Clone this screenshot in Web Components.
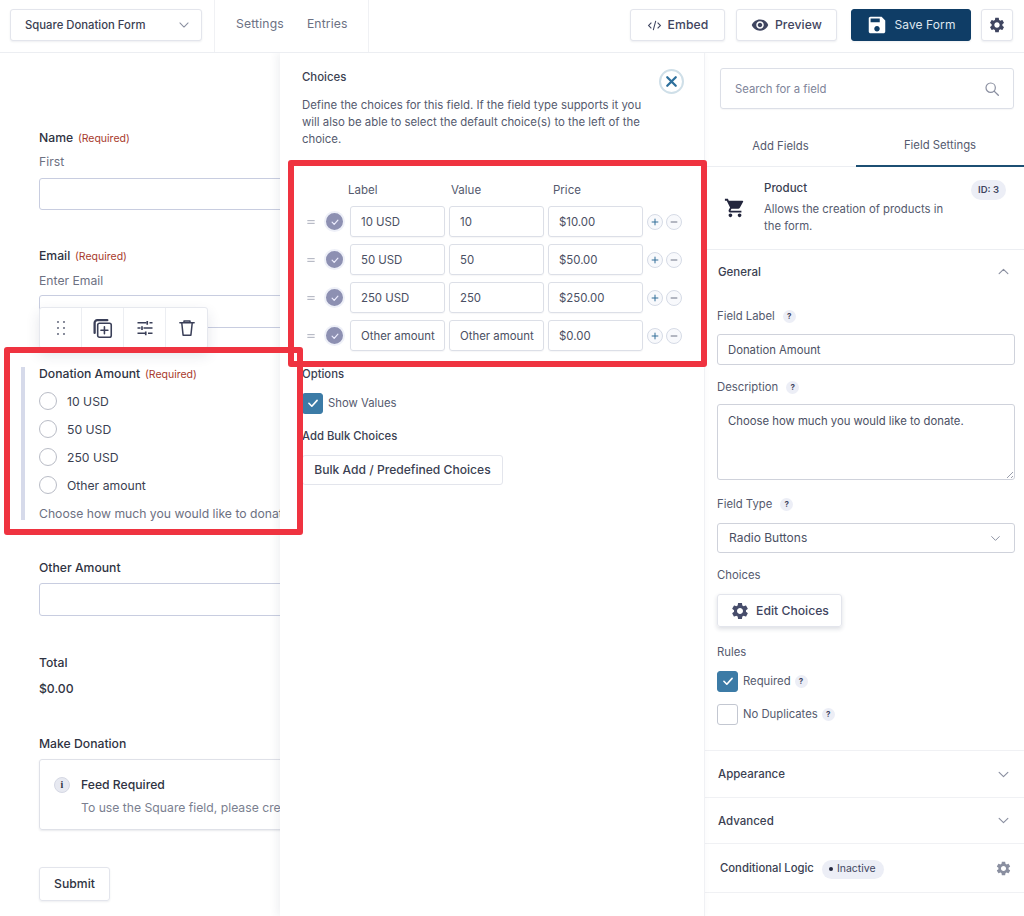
<!DOCTYPE html>
<html lang="en">
<head>
<meta charset="utf-8">
<title>Square Donation Form</title>
<style>
  html, body { margin: 0; background: #fff; }
  body { font: 400 12.2px/20px Inter, "Noto Sans", sans-serif; color: #3b3f52; }
</style>
</head>
<body>
<gf-app></gf-app>
<script>
const ICONS = {
  gear: '<path fill="currentColor" d="M19.14 12.94c.04-.3.06-.61.06-.94 0-.32-.02-.64-.07-.94l2.03-1.58c.18-.14.23-.41.12-.61l-1.92-3.32c-.12-.22-.37-.29-.59-.22l-2.39.96c-.5-.38-1.03-.7-1.62-.94l-.36-2.54c-.04-.24-.24-.41-.48-.41h-3.84c-.24 0-.43.17-.47.41l-.36 2.54c-.59.24-1.13.57-1.62.94l-2.39-.96c-.22-.08-.47 0-.59.22L2.74 8.87c-.12.21-.08.47.12.61l2.03 1.58c-.05.3-.09.63-.09.94s.02.64.07.94l-2.03 1.58c-.18.14-.23.41-.12.61l1.92 3.32c.12.22.37.29.59.22l2.39-.96c.5.38 1.03.7 1.62.94l.36 2.54c.05.24.24.41.48.41h3.84c.24 0 .44-.17.47-.41l.36-2.54c.59-.24 1.13-.56 1.62-.94l2.39.96c.22.08.47 0 .59-.22l1.92-3.32c.12-.22.07-.47-.12-.61l-2.01-1.58zM12 15.6c-1.98 0-3.6-1.62-3.6-3.6s1.62-3.6 3.6-3.6 3.6 1.62 3.6 3.6-1.62 3.6-3.6 3.6z"/>',
  cart: '<path fill="currentColor" d="M7 18c-1.1 0-1.99.9-1.99 2S5.9 22 7 22s2-.9 2-2-.9-2-2-2zM1 2v2h2l3.6 7.59-1.35 2.45c-.16.28-.25.61-.25.96 0 1.1.9 2 2 2h12v-2H7.42c-.14 0-.25-.11-.25-.25l.03-.12.9-1.83h7.45c.75 0 1.41-.41 1.75-1.03l3.58-6.47A1 1 0 0 0 20.01 4H5.21l-.94-2H1zm16 16c-1.1 0-1.99.9-1.99 2s.89 2 1.99 2 2-.9 2-2-.9-2-2-2z"/>',
  save: '<path fill="currentColor" d="M17 3H5c-1.11 0-2 .9-2 2v14c0 1.1.89 2 2 2h14c1.1 0 2-.9 2-2V7l-4-4zm-5 16c-1.66 0-3-1.34-3-3s1.34-3 3-3 3 1.34 3 3-1.34 3-3 3zm3-10H5V5h10v4z"/>',
  eye: '<path fill="currentColor" d="M12 4.5C7 4.5 2.73 7.61 1 12c1.73 4.39 6 7.5 11 7.5s9.27-3.11 11-7.5c-1.73-4.39-6-7.5-11-7.5zM12 17c-2.76 0-5-2.24-5-5s2.24-5 5-5 5 2.24 5 5-2.24 5-5 5zm0-8c-1.66 0-3 1.34-3 3s1.34 3 3 3 3-1.34 3-3-1.34-3-3-3z"/>',
  code: '<path fill="none" stroke="currentColor" stroke-width="1.7" d="M7 7.5 2.5 12 7 16.5M17 7.5l4.5 4.5-4.5 4.5M14 4.5 10 19.5"/>',
  down: '<path fill="none" stroke="currentColor" stroke-width="1.8" stroke-linecap="round" stroke-linejoin="round" d="M5 8.5l7 7 7-7"/>',
  up: '<path fill="none" stroke="currentColor" stroke-width="1.8" stroke-linecap="round" stroke-linejoin="round" d="M5 15.5l7-7 7 7"/>',
  search: '<circle cx="10" cy="10" r="7" fill="none" stroke="currentColor" stroke-width="1.8"/><path stroke="currentColor" stroke-width="2" stroke-linecap="round" d="M15.2 15.2 21.5 21.5"/>',
  dots: '<g fill="currentColor"><circle cx="8" cy="4" r="1.4"/><circle cx="16" cy="4" r="1.4"/><circle cx="8" cy="12" r="1.4"/><circle cx="16" cy="12" r="1.4"/><circle cx="8" cy="20" r="1.4"/><circle cx="16" cy="20" r="1.4"/></g>',
  copy: '<g fill="none" stroke="currentColor" stroke-width="1.8" stroke-linejoin="round" stroke-linecap="round"><path d="M3 17V5.5A3 3 0 0 1 6 2.5h11.5" stroke-width="2.6"/><rect x="6.5" y="6" width="15.5" height="16" rx="2"/><path d="M14.2 10v8M10.2 14h8"/></g>',
  sliders: '<g fill="none" stroke="currentColor" stroke-width="1.8"><path d="M2 5h12M18 5h4M2 12h4M10 12h12M2 19h10M16 19h6"/><path d="M15 2.5v5M8 9.5v5M13 16.5v5" stroke-width="2.2"/></g>',
  trash: '<g fill="none" stroke="currentColor" stroke-width="2" stroke-linejoin="round" stroke-linecap="round"><path d="M2.5 5h19M8 5V2.5h8V5M5 5l1.8 16.5h10.4L19 5"/></g>',
  check: '<path fill="none" stroke="currentColor" stroke-width="2.8" stroke-linecap="round" stroke-linejoin="round" d="M5 12.5l5 5 9-10"/>',
  close: '<path fill="none" stroke="currentColor" stroke-width="3.2" stroke-linecap="round" d="M6 6l12 12M18 6 6 18"/>',
  plus: '<path fill="none" stroke="currentColor" stroke-width="2.4" stroke-linecap="round" d="M12 5v14M5 12h14"/>',
  minus: '<path fill="none" stroke="currentColor" stroke-width="2.4" stroke-linecap="round" d="M5 12h14"/>',
  drag: '<path fill="none" stroke="currentColor" stroke-width="2.8" d="M1 8h22M1 16h22"/>'
};

class GfIcon extends HTMLElement {
  constructor() {
    super();
    this.attachShadow({ mode: 'open' });
    let size = this.getAttribute('size') || 16;
    this.shadowRoot.innerHTML = `
      <style>
        :host { display: inline-flex; flex: none; width: ${size}px; height: ${size}px; }
        svg { display: block; width: 100%; height: 100%; }
      </style>
      <svg viewBox="0 0 24 24" aria-hidden="true">${ICONS[this.getAttribute('name')] || ''}</svg>`;
  }
}

class GfHelp extends HTMLElement {
  constructor() {
    super();
    this.attachShadow({ mode: 'open' });
    this.shadowRoot.innerHTML = `
      <style>
        :host { display: inline-flex; align-items: center; justify-content: center; width: 13px; height: 13px; border-radius: 50%;
          background: #eceef6; color: #3f4560; font-size: 8px; line-height: 13px; font-weight: 700; margin-left: 8px; }
      </style>?`;
  }
}

class GfCheck extends HTMLElement {
  constructor() {
    super();
    this.attachShadow({ mode: 'open' });
    let on = this.hasAttribute('checked');
    this.shadowRoot.innerHTML = `
      <style>
        :host { display: flex; align-items: center; gap: 5px; height: 20px; color: #555a6e; font-size: 11.3px; }
        .box { width: 21px; height: 21px; box-sizing: border-box; border-radius: 3px; display: flex; align-items: center; justify-content: center;
          color: #fff; background: ${on ? '#3c7ba6' : '#fff'}; border: 1px solid ${on ? '#3c7ba6' : '#c3c7d1'}; }
        .text { display: flex; align-items: center; }
      </style>
      <div class="box">${on ? '<gf-icon name="check" size="14"></gf-icon>' : ''}</div>
      <div class="text"><slot></slot></div>`;
  }
}

class GfTopbar extends HTMLElement {
  constructor() {
    super();
    this.attachShadow({ mode: 'open' });
    this.shadowRoot.innerHTML = `
      <style>
        :host { display: flex; align-items: stretch; box-sizing: border-box; height: 53px; border-bottom: 1px solid #eceef2; background: #fff; position: relative; z-index: 3; }
        .btn { display: flex; align-items: center; justify-content: center; gap: 6px; box-sizing: border-box; height: 32px; border: 1px solid #e3e5ec; border-radius: 3px;
          background: #fff; box-shadow: 0 1px 2px rgba(40,50,80,.08); color: #3f4560; font-size: 12.2px; font-weight: 500; letter-spacing: .1px; }
        .form { width: 192px; margin: 9px 0 0 10px; justify-content: space-between; padding: 0 10px 0 14px; color: #3b3f52; font-size: 11.3px; letter-spacing: 0; }
        .form gf-icon { color: #8a8fa0; }
        nav { display: flex; align-items: center; gap: 23px; box-sizing: border-box; width: 155px; margin-left: 12px; padding: 0 0 4px 21px; border-left: 1px solid #f0f1f4; border-right: 1px solid #f0f1f4; color: #6c7183; font-size: 12.2px; letter-spacing: .15px; }
        .right { display: flex; gap: 11px; margin: 9px 0 0 auto; padding-right: 11px; }
        .embed { width: 95px; }
        .preview { width: 101px; }
        .save { width: 120px; margin-left: 3px; background: #0f3d66; border-color: #0f3d66; color: #dfe7ef; font-size: 12px; font-weight: 400; gap: 6px; }
        .save gf-icon { color: #fff; }
        .cog { width: 32px; margin-left: -1px; }
      </style>
      <div class="btn form">Square Donation Form<gf-icon name="down" size="14"></gf-icon></div>
      <nav><span>Settings</span><span>Entries</span></nav>
      <div class="right">
        <div class="btn embed"><gf-icon name="code" size="15"></gf-icon>Embed</div>
        <div class="btn preview"><gf-icon name="eye" size="18"></gf-icon>Preview</div>
        <div class="btn save"><gf-icon name="save" size="22"></gf-icon>Save Form</div>
        <div class="btn cog"><gf-icon name="gear" size="18"></gf-icon></div>
      </div>`;
  }
}

class GfToolbar extends HTMLElement {
  constructor() {
    super();
    this.attachShadow({ mode: 'open' });
    this.shadowRoot.innerHTML = `
      <style>
        :host { position: absolute; left: 39px; top: 254px; display: flex; height: 42px; background: #fff; border: 1px solid #e6e8ee; border-radius: 3px;
          box-sizing: border-box; box-shadow: 0 6px 14px rgba(40,50,90,.12); color: #3a3f58; z-index: 1; }
        div { width: 42px; display: flex; align-items: center; justify-content: center; border-left: 1px solid #eceef2; box-sizing: border-box; }
        div:first-of-type { border-left: 0; width: 41px; color: #6b7082; }
      </style>
      <div><gf-icon name="dots" size="18"></gf-icon></div>
      <div><gf-icon name="copy" size="21"></gf-icon></div>
      <div><gf-icon name="sliders" size="18"></gf-icon></div>
      <div><gf-icon name="trash" size="18"></gf-icon></div>`;
  }
}

class GfCanvas extends HTMLElement {
  constructor() {
    super();
    this.attachShadow({ mode: 'open' });
    this.shadowRoot.innerHTML = `
      <style>
        :host { display: block; position: relative; box-sizing: border-box; width: 280px; flex: none; height: 863px; overflow: hidden; padding: 74px 0 0 39px; white-space: nowrap; }
        .l, .s { padding-top: 2px; line-height: 18px; }
        .l { color: #2f3342; font-weight: 500; }
        .l em { font-style: normal; font-weight: 400; font-size: 10.5px; line-height: 1; color: #a83a2c; margin-left: 1.5px; }
        .s { color: #6d7182; }
        .i { width: 400px; box-sizing: border-box; border: 1px solid #c8cde0; border-radius: 3px; background: #fff; }
        .drop { position: relative; margin: 35px 0 0 -18px; padding-left: 18px; }
        .drop::before { content: ""; position: absolute; left: 0; top: 4px; bottom: 3px; width: 3.5px; background: #d6daea; }
        .radio { display: flex; align-items: center; gap: 10px; height: 28px; color: #3b3f52; }
        .radio i { width: 18px; height: 18px; box-sizing: border-box; border: 1px solid #b9bcc6; border-radius: 50%; }
        .radio span { padding-top: 2px; line-height: 18px; }
        .box { display: flex; gap: 11px; width: 400px; height: 71px; box-sizing: border-box; margin-top: 6px; padding: 15px 14px; border: 1px solid #dfe1e8; border-radius: 3px; box-shadow: 0 1px 2px rgba(40,50,80,.1); }
        .info { width: 16px; height: 16px; flex: none; margin-top: 2px; border-radius: 50%; background: #e7e9f1; border: 1px solid #d5d8e4; box-sizing: border-box; color: #2f3342; font: 700 10px/14px "Liberation Serif", serif; text-align: center; }
        .box .l { padding: 0; line-height: 20px; }
        .box .s { padding: 0; line-height: 22px; margin-top: 2px; color: #7b7f90; }
        .submit { display: flex; align-items: center; justify-content: center; width: 71px; height: 34px; box-sizing: border-box; margin-top: 37px; border: 1px solid #e3e5ec; border-radius: 3px; box-shadow: 0 1px 2px rgba(40,50,80,.08); font-weight: 500; color: #2f3342; }
      </style>
      <gf-toolbar></gf-toolbar>
      <div class="l">Name <em>(Required)</em></div>
      <div class="s" style="margin-top:4px">First</div>
      <div class="i" style="margin-top:7px;height:32px"></div>
      <div class="l" style="margin-top:35px">Email <em>(Required)</em></div>
      <div class="s" style="margin-top:5px">Enter Email</div>
      <div class="i" style="margin-top:5px;height:33px"></div>
      <div class="drop">
        <div class="l">Donation Amount <em>(Required)</em></div>
        <div style="margin-top:4px">
          <div class="radio"><i></i><span>10 USD</span></div>
          <div class="radio"><i></i><span>50 USD</span></div>
          <div class="radio"><i></i><span>250 USD</span></div>
          <div class="radio"><i></i><span>Other amount</span></div>
        </div>
        <div class="s" style="margin-top:4px">Choose how much you would like to donate.</div>
      </div>
      <div class="l" style="margin-top:34px">Other Amount</div>
      <div class="i" style="margin-top:6px;height:33px"></div>
      <div class="l" style="margin-top:36px">Total</div>
      <div class="l" style="margin-top:6px">$0.00</div>
      <div class="l" style="margin-top:35px">Make Donation</div>
      <div class="box">
        <div class="info">i</div>
        <div>
          <div class="l">Feed Required</div>
          <div class="s">To use the Square field, please create a feed.</div>
        </div>
      </div>
      <div class="submit">Submit</div>`;
  }
}

class GfChoiceRow extends HTMLElement {
  constructor() {
    super();
    this.attachShadow({ mode: 'open' });
    let [label, value, price] = ['label', 'value', 'price'].map(a => this.getAttribute(a));
    this.shadowRoot.innerHTML = `
      <style>
        :host { display: grid; grid-template-columns: 44px 95px 95px 95px auto; column-gap: 4px; height: 31px; align-items: center; }
        .lead { display: flex; align-items: center; color: #a4a8b6; padding-left: 5px; gap: 9px; }
        .tick { width: 21px; height: 21px; box-sizing: border-box; border: 2.5px solid #eef0f8; border-radius: 50%; background: #8d90b2; color: #eef; display: flex; align-items: center; justify-content: center; }
        .i { box-sizing: border-box; height: 31px; border: 1px solid #dcdfe7; border-radius: 3px; padding: 0 10px; line-height: 30px; color: #4b5063; font-size: 11.4px; white-space: nowrap; overflow: hidden; box-shadow: 0 1px 1px rgba(40,50,80,.04); }
        .ops { display: flex; gap: 3px; }
        .op { width: 16px; height: 16px; box-sizing: border-box; border-radius: 50%; border: 1px solid #d6dbe6; background: #f8f9fc; display: flex; align-items: center; justify-content: center; }
        .plus { color: #336f99; }
        .minus { color: #6f7486; }
      </style>
      <div class="lead"><gf-icon name="drag" size="8"></gf-icon><div class="tick"><gf-icon name="check" size="10"></gf-icon></div></div>
      <div class="i">${label}</div><div class="i">${value}</div><div class="i">${price}</div>
      <div class="ops"><div class="op plus"><gf-icon name="plus" size="10"></gf-icon></div><div class="op minus"><gf-icon name="minus" size="10"></gf-icon></div></div>`;
  }
}

class GfFlyout extends HTMLElement {
  constructor() {
    super();
    this.attachShadow({ mode: 'open' });
    this.shadowRoot.innerHTML = `
      <style>
        :host { display: block; position: relative; box-sizing: border-box; width: 425px; flex: none; height: 863px; padding: 14px 0 0 22px; border-right: 1px solid #f0f1f4;
          background: #fff; box-shadow: -3px 0 8px rgba(40,50,80,.07); color: #555a6e; }
        h2 { margin: 0; font: 500 11.4px/21px Inter, sans-serif; color: #3b3f52; }
        p { margin: 9px 0 0; width: 345px; font-size: 11.4px; line-height: 17px; color: #555a6e; }
        .close { position: absolute; left: 379px; top: 16px; width: 25px; height: 25px; box-sizing: border-box; border: 2px solid #cfdfe8; border-radius: 50%; color: #2d6f9c; display: flex; align-items: center; justify-content: center; }
        .head { display: grid; grid-template-columns: 44px 95px 95px 95px; column-gap: 4px; margin-top: 32px; font-size: 11.5px; color: #555a6e; }
        .head span:nth-child(2) { margin-left: -2px; }
        .head span:nth-child(3) { margin-left: 2px; }
        .head span:nth-child(4) { margin-left: 5px; }
        .rows { display: grid; gap: 7px; margin-top: 6px; }
        .t { margin-top: 13px; font-size: 11.3px; color: #3b3f52; font-weight: 500; }
        gf-check { margin-top: 9px; }
        .bulk { display: inline-flex; align-items: center; height: 30px; box-sizing: border-box; width: 201px; margin-top: 9px; justify-content: center; border: 1px solid #e3e5ec; border-radius: 3px; font-size: 12.1px; font-weight: 500; color: #3b3f52; white-space: nowrap; }
      </style>
      <h2>Choices</h2>
      <p>Define the choices for this field. If the field type supports it you will also be able to select the default choice(s) to the left of the choice.</p>
      <div class="close"><gf-icon name="close" size="17"></gf-icon></div>
      <div class="head"><span></span><span>Label</span><span>Value</span><span>Price</span></div>
      <div class="rows">
        <gf-choice-row label="10 USD" value="10" price="$10.00"></gf-choice-row>
        <gf-choice-row label="50 USD" value="50" price="$50.00"></gf-choice-row>
        <gf-choice-row label="250 USD" value="250" price="$250.00"></gf-choice-row>
        <gf-choice-row label="Other amount" value="Other amount" price="$0.00"></gf-choice-row>
      </div>
      <div class="t">Options</div>
      <gf-check checked>Show Values</gf-check>
      <div class="t">Add Bulk Choices</div>
      <div class="bulk">Bulk Add / Predefined Choices</div>`;
  }
}

class GfSidebar extends HTMLElement {
  constructor() {
    super();
    this.attachShadow({ mode: 'open' });
    this.shadowRoot.innerHTML = `
      <style>
        :host { display: block; flex: 1; min-width: 0; height: 863px; overflow: hidden; color: #555a6e; font-size: 11.3px; }
        .search { display: flex; align-items: center; justify-content: space-between; box-sizing: border-box; height: 41px; margin: 15px 10px 0 15px; padding: 0 13px 0 14px; border: 1px solid #dcdfe7; border-radius: 3px; color: #80859a; box-shadow: 0 1px 1px rgba(40,50,80,.04); }
        .search gf-icon { color: #8a8fa0; }
        .tabs { display: flex; height: 58px; margin-top: 0; border-bottom: 1px solid #eceef2; box-sizing: border-box; }
        .tabs div { display: flex; align-items: center; justify-content: center; padding-top: 16px; box-sizing: border-box; height: 58px; width: 151px; color: #555a6e; }
        .tabs div + div { flex: 1; border-bottom: 2px solid #1c4f73; }
        .prod { position: relative; display: flex; box-sizing: border-box; height: 83px; padding: 11px 0 0 19px; border-bottom: 1px solid #eceef2; }
        .prod gf-icon { color: #23263d; margin: 19px 18px 0 0; }
        .prod b { display: block; font-weight: 500; color: #3b3f52; font-size: 11.5px; }
        .prod p { margin: 3px 0 0; width: 195px; line-height: 17px; }
        .badge { position: absolute; right: 18px; top: 13px; padding: 0 7px; border-radius: 10px; background: #eceef6; color: #3f4560; font-size: 9.5px; font-weight: 600; line-height: 20px; }
        .sec { display: flex; align-items: center; justify-content: space-between; padding: 0 13px; color: #3b3f52; font-weight: 500; font-size: 11.5px; }
        .sec gf-icon { color: #8a8fa0; }
        .body { padding: 0 9px 0 12px; }
        .t { display: flex; align-items: center; }
        .i { display: flex; align-items: center; justify-content: space-between; box-sizing: border-box; border: 1px solid #cfd2db; border-radius: 3px; padding: 0 12px 0 10px; color: #4b5063; }
        .i gf-icon { color: #8a8fa0; }
        .text { align-items: flex-start; padding-top: 6px; position: relative; }
        .text::after { content: ""; position: absolute; right: 1px; bottom: 1px; width: 7px; height: 7px; background: repeating-linear-gradient(135deg, transparent 0 2px, #9a9eac 2px 3px); clip-path: polygon(100% 0, 100% 100%, 0 100%); }
        .edit { display: inline-flex; align-items: center; gap: 6px; height: 33px; width: 125px; box-sizing: border-box; justify-content: center; border: 1px solid #e3e5ec; border-radius: 3px; box-shadow: 0 2px 4px rgba(40,50,80,.16); font-weight: 500; font-size: 12.2px; color: #3f4560; }
        .edit gf-icon { color: #474d6b; }
        .row { border-top: 1px solid #f0f1f4; box-sizing: border-box; }
        .cond { display: flex; align-items: center; padding: 0 12px 0 15px; color: #3b3f52; font-size: 11.3px; font-weight: 500; }
        .pill { display: inline-flex; align-items: center; gap: 4px; height: 19px; margin: 2px 0 0 8px; padding: 0 8px 0 7px; border-radius: 10px; background: #eceef6; font-size: 10.5px; font-weight: 400; color: #3f4560; }
        .pill i { width: 4px; height: 4px; border-radius: 50%; background: #23263d; margin-top: -1px; }
        .cond gf-icon { color: #8a8fa0; margin-left: auto; }
      </style>
      <div class="search">Search for a field<gf-icon name="search" size="16"></gf-icon></div>
      <div class="tabs"><div>Add Fields</div><div>Field Settings</div></div>
      <div class="prod">
        <gf-icon name="cart" size="22"></gf-icon>
        <div><b>Product</b><p>Allows the creation of products in the form.</p></div>
        <div class="badge">ID: 3</div>
      </div>
      <div class="sec" style="height:43px">General<gf-icon name="up" size="15"></gf-icon></div>
      <div class="body">
        <div class="t" style="margin-top:13px">Field Label<gf-help></gf-help></div>
        <div class="i" style="margin-top:8px;height:31px">Donation Amount</div>
        <div class="t" style="margin-top:12px">Description<gf-help></gf-help></div>
        <div class="i text" style="margin-top:7px;height:76px">Choose how much you would like to donate.</div>
        <div class="t" style="margin-top:14px">Field Type<gf-help></gf-help></div>
        <div class="i" style="margin-top:9px;height:30px;font-size:12px;padding-left:11px">Radio Buttons<gf-icon name="down" size="13"></gf-icon></div>
        <div class="t" style="margin-top:12px">Choices</div>
        <div style="margin-top:9px;height:33px"><div class="edit"><gf-icon name="gear" size="20"></gf-icon>Edit Choices</div></div>
        <div class="t" style="margin-top:15px">Rules</div>
        <gf-check checked style="margin-top:9px">Required<gf-help style="margin-left:4px"></gf-help></gf-check>
        <gf-check style="margin-top:13px">No Duplicates<gf-help style="margin-left:4px"></gf-help></gf-check>
      </div>
      <div class="row sec" style="margin-top:26px;height:47px">Appearance<gf-icon name="down" size="15"></gf-icon></div>
      <div class="row sec" style="height:46px">Advanced<gf-icon name="down" size="15"></gf-icon></div>
      <div class="row cond" style="height:50px;border-bottom:1px solid #f0f1f4">Conditional Logic<span class="pill"><i></i>Inactive</span><gf-icon name="gear" size="17"></gf-icon></div>`;
  }
}

class GfMark extends HTMLElement {
  constructor() {
    super();
    this.attachShadow({ mode: 'open' });
    this.shadowRoot.innerHTML = `
      <style>
        :host { position: absolute; box-sizing: border-box; border: 6.5px solid #ef3340; border-radius: 3px; pointer-events: none; z-index: 5; }
      </style>`;
  }
}

class GfApp extends HTMLElement {
  constructor() {
    super();
    this.attachShadow({ mode: 'open' });
    this.shadowRoot.innerHTML = `
      <style>
        :host { display: block; position: relative; width: 1024px; height: 916px; overflow: hidden; background: #fff; }
        main { display: flex; }
      </style>
      <gf-topbar></gf-topbar>
      <main><gf-canvas></gf-canvas><gf-flyout></gf-flyout><gf-sidebar></gf-sidebar></main>
      <gf-mark style="left:288px;top:160px;width:419px;height:207px"></gf-mark>
      <gf-mark style="left:4px;top:347px;width:299px;height:188px"></gf-mark>`;
  }
}

customElements.define('gf-icon', GfIcon);
customElements.define('gf-help', GfHelp);
customElements.define('gf-check', GfCheck);
customElements.define('gf-topbar', GfTopbar);
customElements.define('gf-toolbar', GfToolbar);
customElements.define('gf-canvas', GfCanvas);
customElements.define('gf-choice-row', GfChoiceRow);
customElements.define('gf-flyout', GfFlyout);
customElements.define('gf-sidebar', GfSidebar);
customElements.define('gf-mark', GfMark);
customElements.define('gf-app', GfApp);
</script>
</body>
</html>
